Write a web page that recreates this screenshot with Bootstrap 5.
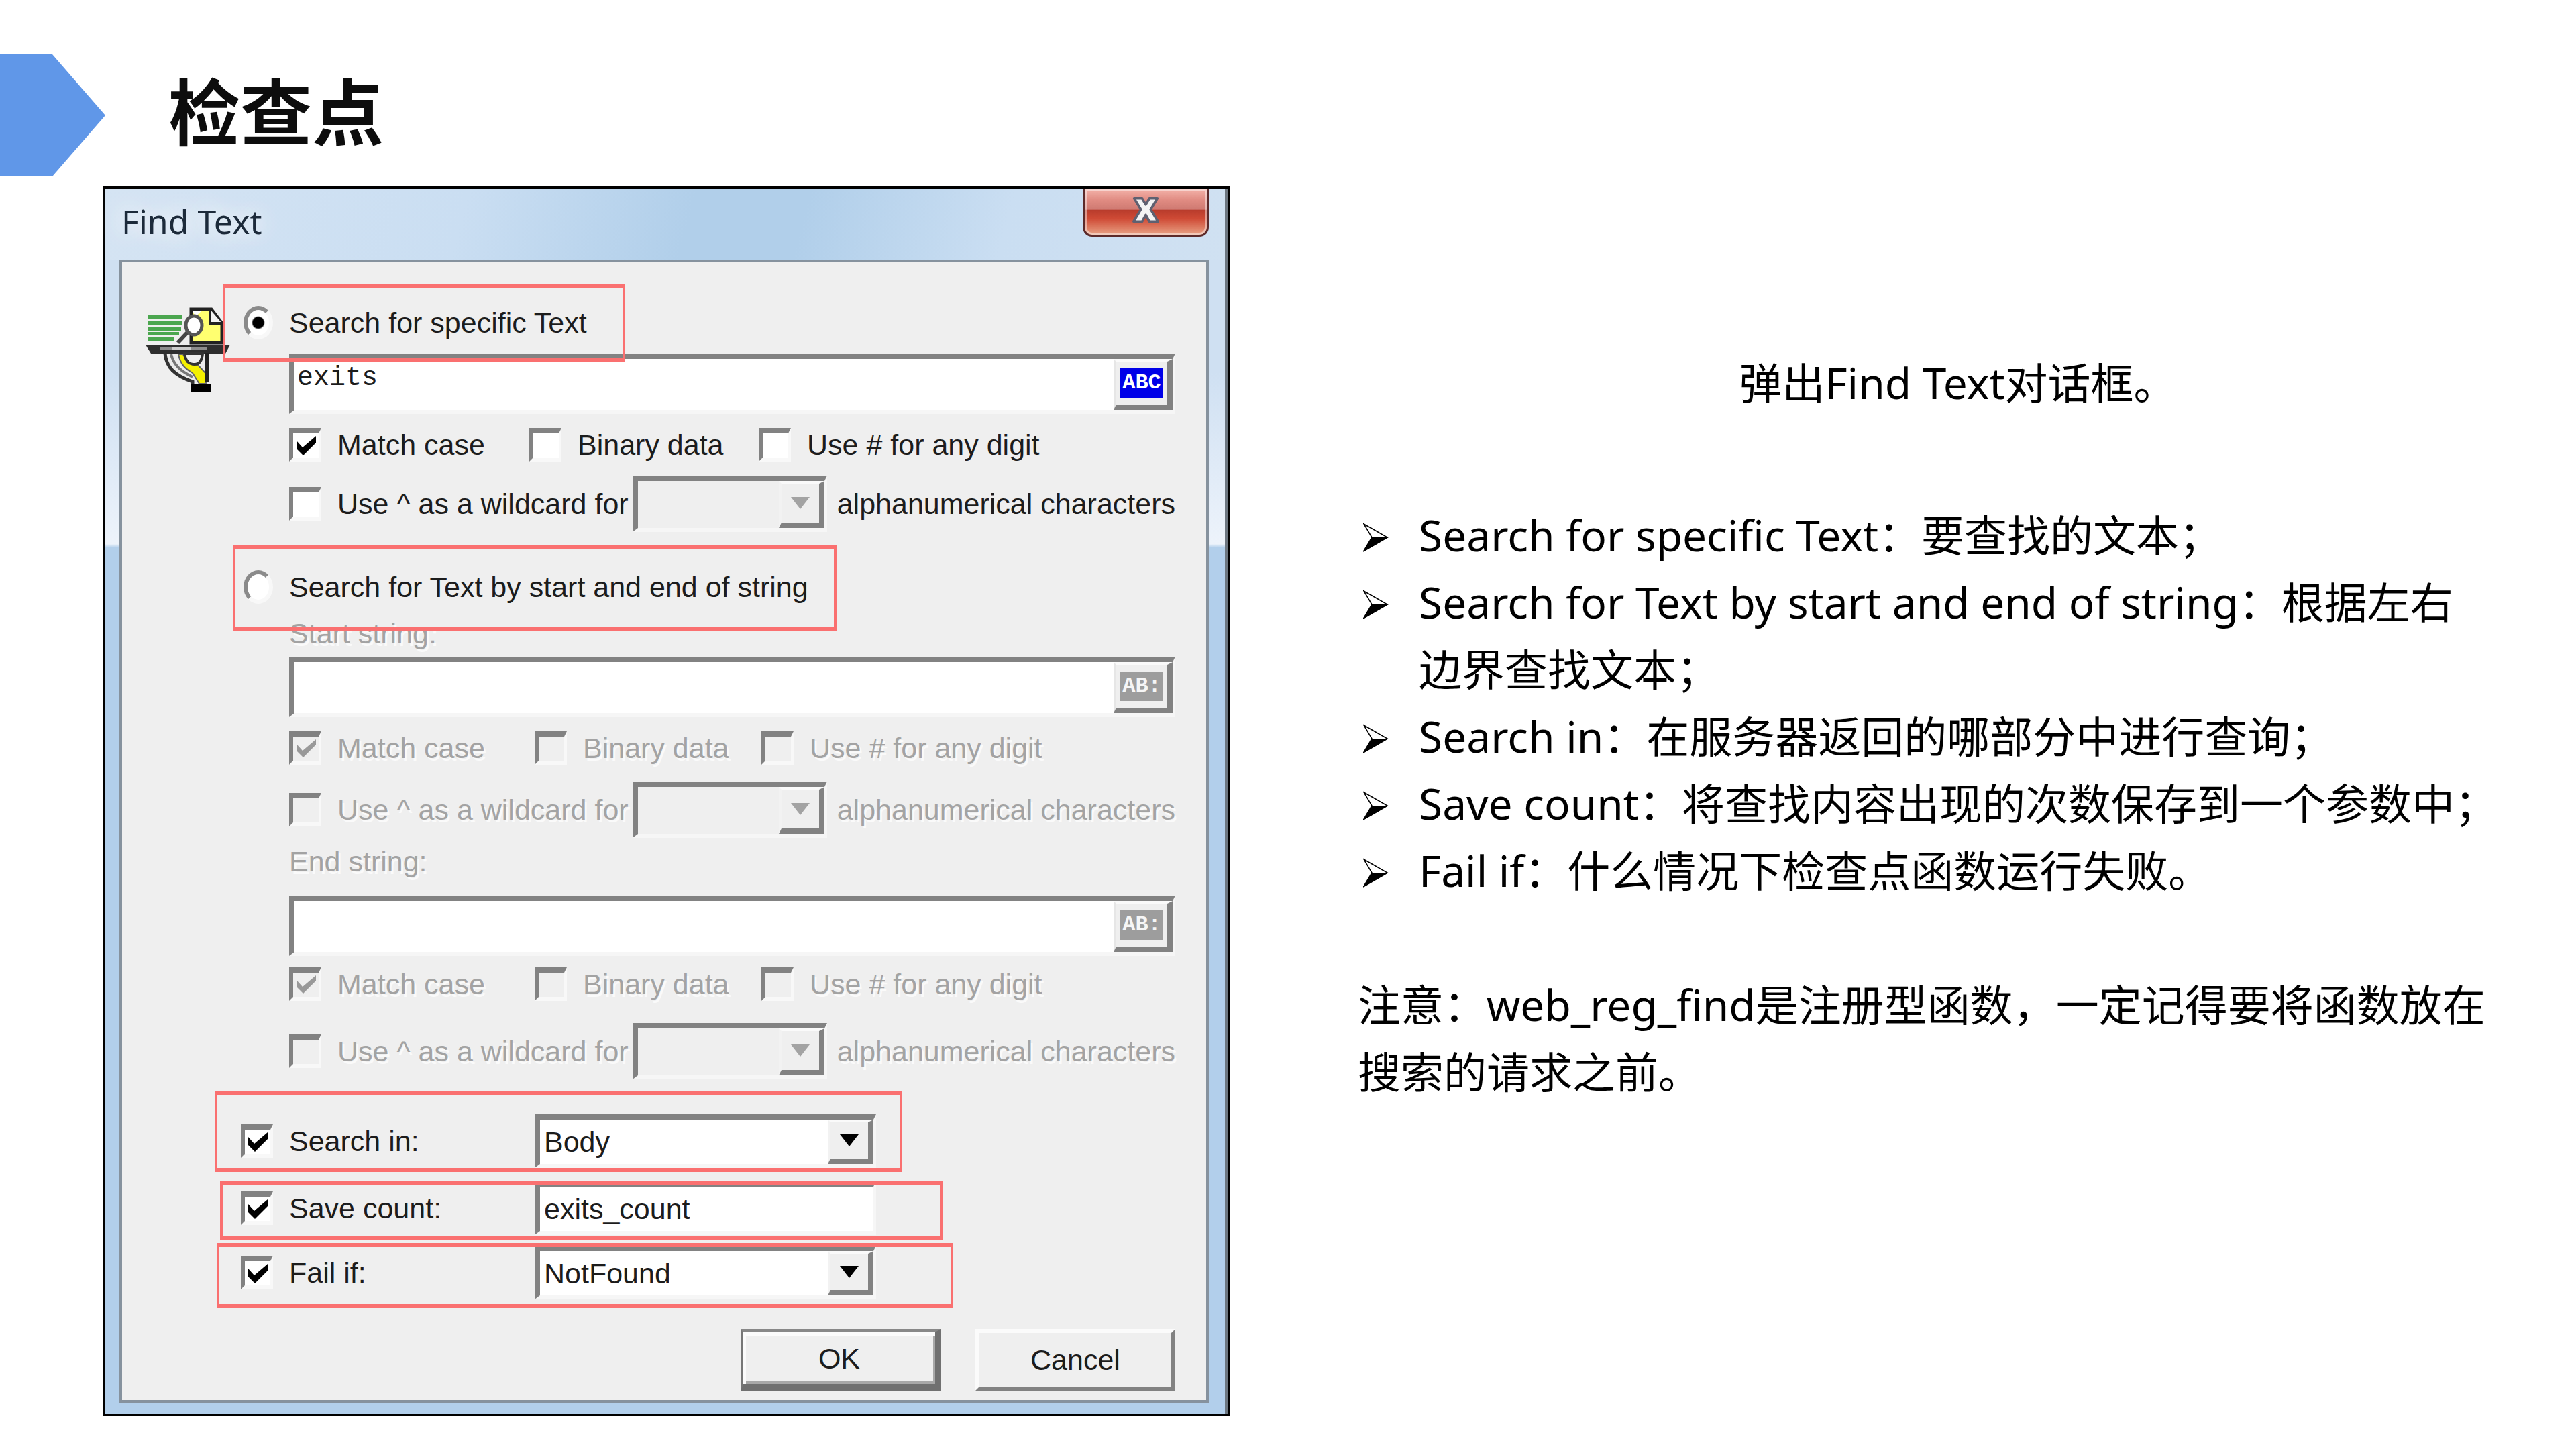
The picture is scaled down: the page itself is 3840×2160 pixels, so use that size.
<!DOCTYPE html>
<html lang="zh-CN">
<head>
<meta charset="utf-8">
<meta name="viewport" content="width=device-width, initial-scale=1">
<title>检查点</title>
<link rel="stylesheet" href="https://cdn.jsdelivr.net/npm/bootstrap@5.3.0/dist/css/bootstrap.min.css">
<style>
  :root { --face: #efefef; --shade: #828282; --dim: #a3a3a3; }
  body { background: #fff; color: #000; font: 64px/100px "Noto Sans", "Noto Sans CJK SC", sans-serif; }

  /* slide heading */
  .slide-head { padding-top: 81px; margin-bottom: 15px; }
  .slide-head svg { width: 157px; height: 182px; flex: none; }
  .slide-title { font: 700 107px/160px "Noto Sans CJK SC", sans-serif; color: #0d0d0d; margin: 0 0 0 94px; padding-bottom: 20px; }
  .slide-body { grid-template-columns: 154fr 1679fr 191fr minmax(0, 1711fr) 105fr; }

  /* dialog window */
  .win { grid-column: 2; border: 3px solid #000; padding: 0 28px 17px 21px;
    background: linear-gradient(#cfe0f2 15%, #edf3fb 29%, #b2cfeb 29.3%); box-shadow: inset -4px 0 0 #6c7680; }
  .win-bar { height: 106px; margin: 0 -24px 0 -21px; padding: 0 24px 8px 24px;
    background: linear-gradient(105deg, #d5e4f3 0%, #cadef2 32%, #b1cfea 52%, #b1cfea 62%, #cadef2 80%, #d0e1f2 100%); }
  .win-bar h2 { font: 400 50px/64px "Noto Sans", sans-serif; color: #1c2a3a; margin: 0; text-shadow: 0 0 30px #fff, 0 0 50px #fff; }
  .win-close { width: 188px; height: 72px; padding: 0; border: 3px solid #5c2a2a; border-top: 0; border-radius: 0 0 14px 14px; line-height: 0;
    background: linear-gradient(#f4b4ab 0%, #e08b82 25%, #cf7a72 45%, #b93c2c 47%, #cf4a35 65%, #e8a184 100%);
    box-shadow: inset 0 0 0 3px rgba(255,255,255,.45); }
  .win-close svg { margin-bottom: 6px; }
  .client { background: var(--face); border: 4px solid #86929e; font: 43px/60px "Liberation Sans", sans-serif; color: #1c1c1c; padding-bottom: 14px; }
  .tool-icon { width: 177px; flex: none; padding: 67px 0 0 35px; line-height: 0; }
  .form-side { padding-right: 46px; min-width: 0; }
  .indent { padding-left: 72px; }
  .g12 { margin-top: 12px; } .g16 { margin-top: 16px; } .g20 { margin-top: 20px; }
  .g28 { margin-top: 28px; } .g44 { margin-top: 44px; } .g52 { margin-top: 52px; } .g60 { margin-top: 60px; }

  .tick { appearance: none; width: 48px; height: 50px; flex: none; margin: 0 24px 0 0; background: #fff;
    border-style: solid; border-width: 8px 4px 6px 6px; border-color: var(--shade) #f8f8f8 #f8f8f8 var(--shade); }
  .tick:checked { background: #fff url("data:image/svg+xml,%3Csvg xmlns='http://www.w3.org/2000/svg' viewBox='0 0 38 36' preserveAspectRatio='none'%3E%3Cpath d='M5 11L14 21L34 4V14L15 33L5 23Z'/%3E%3C/svg%3E") center/100% 100% no-repeat; }
  .tick:disabled { background-color: var(--face); }
  .tick:disabled:checked { background-image: url("data:image/svg+xml,%3Csvg xmlns='http://www.w3.org/2000/svg' viewBox='0 0 38 36' preserveAspectRatio='none'%3E%3Cpath fill='%23999' d='M5 11L14 21L34 4V12L15 31L5 21Z'/%3E%3C/svg%3E"); }
  .dial { appearance: none; width: 44px; height: 50px; flex: none; margin: 0 24px 0 4px; border-radius: 50%; background: #fff;
    border: 6px solid; border-color: #8a8a8a #f8f8f8 #f8f8f8 #8a8a8a; }
  .dial:checked { background: radial-gradient(circle, #000 8px, #fff 10px); }

  .sunk { border-style: solid; border-width: 8px 4px 6px 8px; border-color: var(--shade) #f6f6f6 #f6f6f6 var(--shade); background: #fff; }
  .sunk input, .sunk select { appearance: none; border: 0; background: transparent; width: 100%; height: 100%; min-width: 0; padding: 0 6px; font: inherit; color: inherit; outline: 0; opacity: 1; }
  .string-field { height: 90px; }
  .string-field input { font: 40px/44px "Liberation Mono", monospace; padding: 0 4px 20px; }
  .abc { width: 88px; flex: none; padding: 0; background: var(--face); border-style: solid; border-width: 4px 8px 8px 4px; border-color: #fafafa var(--shade) var(--shade) #e6e6e6; }
  .abc span { display: block; width: 64px; margin: auto; background: #0000e8; color: #fff; font: 700 32px/44px "Liberation Mono", monospace; text-align: center; }
  .abc:disabled span { background: #9d9d9d; color: #f6f6f6; }
  .combo { height: 84px; position: relative; }
  .combo .drop { position: absolute; top: 0; right: 0; bottom: 0; width: 68px; pointer-events: none; background: var(--face);
    border-style: solid; border-width: 4px 8px 8px 4px; border-color: #fafafa var(--shade) var(--shade) #f2f2f2; }
  .drop svg { width: 28px; height: 18px; }
  .is-off { background: var(--face); }
  .is-off .drop { color: var(--dim); }
  .off { color: var(--dim); text-shadow: 3px 4px 0 #fafafa; }

  .checks { grid-template-columns: 358fr 342fr 621fr; height: 60px; }
  .off.checks { grid-template-columns: 366fr 338fr 617fr; }
  .wild { grid-template-columns: 516fr 292fr 513fr; }
  .wild > :last-child { padding-left: 15px; }
  .opts { grid-template-columns: 438fr 509fr 446fr; }
  .opts .combo, .opts .sunk { height: 80px; }
  .caption { height: 46px; line-height: 46px; display: block; }
  .callout { position: absolute; z-index: 2; border: solid #fa7070; border-width: 6px 4px; pointer-events: none; }
  .c1 { inset: -28px auto -28px -27px; width: 600px; }
  .c2 { inset: -32px auto -36px -12px; width: 900px; }
  .c3 { inset: -34px auto -6px -39px; width: 1025px; }
  .c4 { inset: 0 auto -8px -31px; width: 1077px; }
  .c5 { inset: -4px auto -13px -36px; width: 1098px; }
  .push-row { gap: 52px; }
  .push { width: 298px; height: 92px; padding: 0; color: inherit; font: inherit; background: var(--face); border-style: solid; border-radius: 0; border-width: 6px; border-color: #fbfbfb var(--shade) var(--shade) #fbfbfb; }
  .push-main { border-width: 5px 8px 10px 4px; border-color: #888 #707070 #707070 #777; box-shadow: inset 4px 5px 0 #fbfbfb, inset -3px -4px 0 #a8a8a8; }

  /* notes */
  .notes { grid-column: 4; padding-top: 243px; }
  .lede-line { padding-left: 78px; margin-bottom: 127px; }
  .notes ul { padding-right: 24px; margin-bottom: 100px; }
  .arrow { width: 38px; height: 44px; flex: none; margin: 31px 45px 0 8px; }
</style>
<script src="https://cdn.jsdelivr.net/npm/bootstrap@5.3.0/dist/js/bootstrap.bundle.min.js"></script>
</head>
<body>
<svg class="d-none" aria-hidden="true">
  <symbol id="arrow" viewBox="0 0 38 44"><path d="M1 2L36 22L1 42L13 22Z" fill="none" stroke="#000" stroke-width="1.5"/><path d="M13 22H38L0 44Z"/></symbol>
  <symbol id="tri" viewBox="0 0 28 18"><path d="M0 0H28L14 18Z" fill="currentColor"/></symbol>
</svg>

<header class="slide-head d-flex align-items-center">
  <svg viewBox="0 0 157 182" aria-hidden="true"><path d="M0 0H78L157 91L78 182H0Z" fill="#6097e8"/></svg>
  <h1 class="slide-title">检查点</h1>
</header>

<main class="slide-body d-grid">
  <section class="win" aria-labelledby="win-title">
    <div class="win-bar d-flex justify-content-between">
      <h2 id="win-title" class="align-self-center">Find Text</h2>
      <button type="button" class="win-close" aria-label="Close">
        <svg width="42" height="40" viewBox="0 0 46 44"><path d="M4 3H17L23 13L29 3H42L31 21L43 41H29L23 30L17 41H3L15 21Z" fill="#f4f4f4" stroke="#5f6070" stroke-width="4" stroke-linejoin="round"/></svg>
      </button>
    </div>

    <form class="client d-flex">
      <div class="tool-icon">
        <svg width="126" height="126" viewBox="0 0 126 126" aria-hidden="true">
          <path fill="#4ba64f" d="M3 12H55V18H3ZM3 21H55V27H3ZM3 29H53V35H3ZM3 37H50V42H3ZM3 44H43V50H3Z"/>
          <path d="M68 3H98L114 24V53H68Z" fill="#ffff70" stroke="#222" stroke-width="5"/>
          <path d="M96 3V24H114" fill="#f4f4f4" stroke="#222" stroke-width="4"/>
          <path d="M70 5H84L74 14Z" fill="#fff"/>
          <path d="M63 37L48 53" stroke="#444" stroke-width="6"/>
          <ellipse cx="72" cy="27" rx="12" ry="14" fill="#fff" stroke="#555" stroke-width="5"/>
          <path d="M0 56H126L119 69H8Z" fill="#2e2e2e"/><path d="M22 60H92V64H22Z" fill="#8d8d8d"/><path d="M40 60H68V64H40Z" fill="#ccc"/>
          <path d="M29 69C31 90 44 102 70 111V116H94V69Z" fill="#ececec"/>
          <path d="M29 69C31 90 44 102 70 111V116" fill="none" stroke="#333" stroke-width="5"/>
          <path d="M49 70C52 86 60 92 70 98L80 114H90V99L78 86L62 82L56 70Z" fill="#f4f000" stroke="#666" stroke-width="2"/>
          <path d="M38 70C42 86 52 95 70 104" fill="none" stroke="#777" stroke-width="4"/>
          <path d="M58 69C60 82 66 85 73 85C80 85 84 80 85 69Z" fill="#efefef" stroke="#333" stroke-width="4"/>
          <path d="M91 68V112" stroke="#222" stroke-width="6"/>
          <path d="M67 114H98V126H67Z"/>
        </svg>
      </div>

      <div class="form-side flex-grow-1">
        <div class="position-relative d-flex align-items-center g60">
          <input class="dial" type="radio" name="mode" id="m1" checked><label for="m1">Search for specific Text</label>
          <span class="callout c1"></span>
        </div>
        <div class="indent">
          <div class="sunk string-field d-flex g16">
            <input type="text" value="exits" aria-label="Search text"><button type="button" class="abc"><span>ABC</span></button>
          </div>
          <div class="checks d-grid align-items-center text-nowrap g16">
            <div class="d-flex align-items-center"><input class="tick" type="checkbox" id="a1" checked><label for="a1">Match case</label></div>
            <div class="d-flex align-items-center"><input class="tick" type="checkbox" id="a2"><label for="a2">Binary data</label></div>
            <div class="d-flex align-items-center"><input class="tick" type="checkbox" id="a3"><label for="a3">Use # for any digit</label></div>
          </div>
          <div class="wild d-grid align-items-center text-nowrap g16">
            <div class="d-flex align-items-center"><input class="tick" type="checkbox" id="a4"><label for="a4">Use ^ as a wildcard for</label></div>
            <div class="sunk combo is-off"><select disabled aria-label="Wildcard type"><option></option></select><span class="drop d-flex align-items-center justify-content-center"><svg><use href="#tri"/></svg></span></div>
            <span>alphanumerical characters</span>
          </div>
        </div>

        <div class="position-relative d-flex align-items-center g52">
          <input class="dial" type="radio" name="mode" id="m2"><label for="m2">Search for Text by start and end of string</label>
          <span class="callout c2"></span>
        </div>
        <div class="indent">
          <label class="caption off g16" for="s1">Start string:</label>
          <div class="sunk string-field d-flex g12">
            <input type="text" id="s1" disabled><button type="button" class="abc" disabled><span>AB:</span></button>
          </div>
          <div class="checks off d-grid align-items-center text-nowrap g16">
            <div class="d-flex align-items-center"><input class="tick" type="checkbox" id="b1" checked disabled><label for="b1">Match case</label></div>
            <div class="d-flex align-items-center"><input class="tick" type="checkbox" id="b2" disabled><label for="b2">Binary data</label></div>
            <div class="d-flex align-items-center"><input class="tick" type="checkbox" id="b3" disabled><label for="b3">Use # for any digit</label></div>
          </div>
          <div class="wild off d-grid align-items-center text-nowrap g20">
            <div class="d-flex align-items-center"><input class="tick" type="checkbox" id="b4" disabled><label for="b4">Use ^ as a wildcard for</label></div>
            <div class="sunk combo is-off"><select disabled aria-label="Wildcard type"><option></option></select><span class="drop d-flex align-items-center justify-content-center"><svg><use href="#tri"/></svg></span></div>
            <span>alphanumerical characters</span>
          </div>
          <label class="caption off g12" for="s2">End string:</label>
          <div class="sunk string-field d-flex g28">
            <input type="text" id="s2" disabled><button type="button" class="abc" disabled><span>AB:</span></button>
          </div>
          <div class="checks off d-grid align-items-center text-nowrap g12">
            <div class="d-flex align-items-center"><input class="tick" type="checkbox" id="d1" checked disabled><label for="d1">Match case</label></div>
            <div class="d-flex align-items-center"><input class="tick" type="checkbox" id="d2" disabled><label for="d2">Binary data</label></div>
            <div class="d-flex align-items-center"><input class="tick" type="checkbox" id="d3" disabled><label for="d3">Use # for any digit</label></div>
          </div>
          <div class="wild off d-grid align-items-center text-nowrap g28">
            <div class="d-flex align-items-center"><input class="tick" type="checkbox" id="d4" disabled><label for="d4">Use ^ as a wildcard for</label></div>
            <div class="sunk combo is-off"><select disabled aria-label="Wildcard type"><option></option></select><span class="drop d-flex align-items-center justify-content-center"><svg><use href="#tri"/></svg></span></div>
            <span>alphanumerical characters</span>
          </div>
        </div>

        <div class="opts position-relative d-grid align-items-center g52">
          <div class="d-flex align-items-center"><input class="tick" type="checkbox" id="e1" checked><label for="e1">Search in:</label></div>
          <div class="sunk combo"><select aria-label="Search in"><option>Body</option></select><span class="drop d-flex align-items-center justify-content-center text-black"><svg><use href="#tri"/></svg></span></div>
          <span class="callout c3"></span>
        </div>
        <div class="opts position-relative d-grid align-items-center g20">
          <div class="d-flex align-items-center"><input class="tick" type="checkbox" id="e2" checked><label for="e2">Save count:</label></div>
          <div class="sunk"><input type="text" value="exits_count" aria-label="Save count"></div>
          <span class="callout c4"></span>
        </div>
        <div class="opts position-relative d-grid align-items-center g16">
          <div class="d-flex align-items-center"><input class="tick" type="checkbox" id="e3" checked><label for="e3">Fail if:</label></div>
          <div class="sunk combo"><select aria-label="Fail if"><option>NotFound</option></select><span class="drop d-flex align-items-center justify-content-center text-black"><svg><use href="#tri"/></svg></span></div>
          <span class="callout c5"></span>
        </div>

        <div class="push-row d-flex justify-content-end g44">
          <button type="button" class="btn push push-main">OK</button>
          <button type="button" class="btn push">Cancel</button>
        </div>
      </div>
    </form>
  </section>

  <article class="notes">
    <p class="lede-line text-center">弹出Find Text对话框。</p>
    <ul class="list-unstyled">
      <li class="d-flex"><svg class="arrow"><use href="#arrow"/></svg><span>Search for specific Text：要查找的文本；</span></li>
      <li class="d-flex"><svg class="arrow"><use href="#arrow"/></svg><span>Search for Text by start and end of string：根据左右边界查找文本；</span></li>
      <li class="d-flex"><svg class="arrow"><use href="#arrow"/></svg><span>Search in：在服务器返回的哪部分中进行查询；</span></li>
      <li class="d-flex"><svg class="arrow"><use href="#arrow"/></svg><span class="text-nowrap">Save count：将查找内容出现的次数保存到一个参数中；</span></li>
      <li class="d-flex"><svg class="arrow"><use href="#arrow"/></svg><span>Fail if：什么情况下检查点函数运行失败。</span></li>
    </ul>
    <p class="mb-0">注意：web_reg_find是注册型函数，一定记得要将函数放在搜索的请求之前。</p>
  </article>
</main>
</body>
</html>
